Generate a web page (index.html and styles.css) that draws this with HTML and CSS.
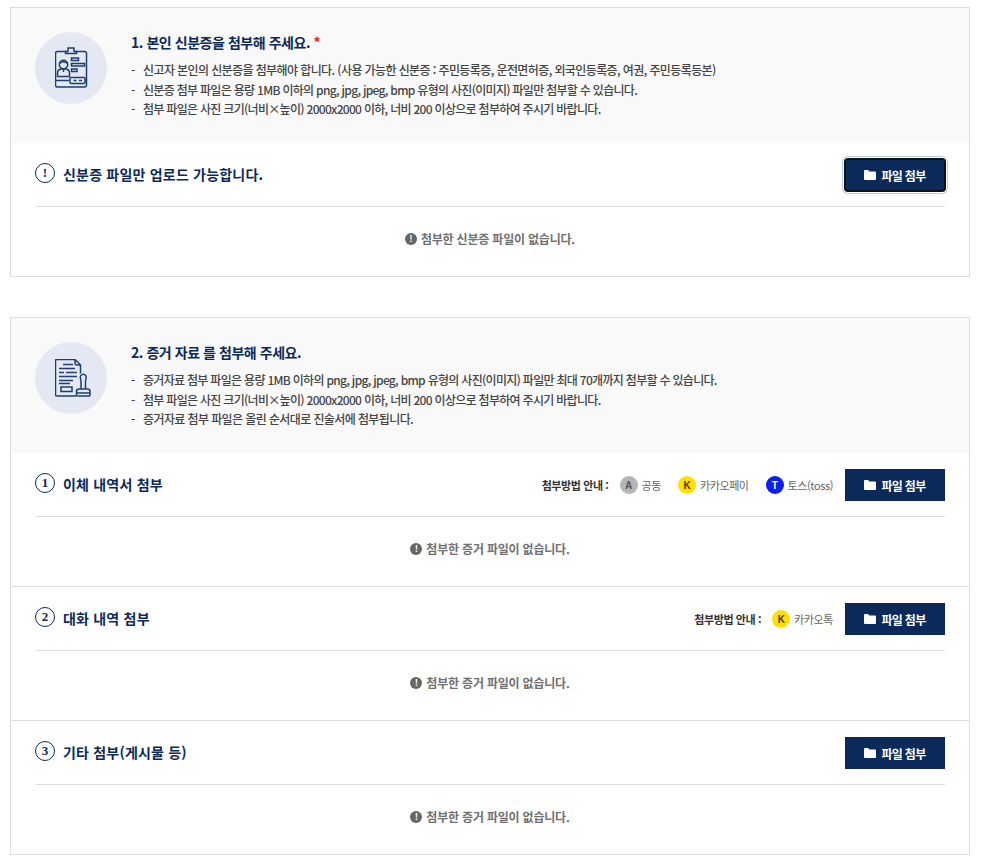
FILE: index.html
```html
<!DOCTYPE html>
<html lang="ko">
<head>
    <meta charset="UTF-8">
    <meta name="viewport" content="width=device-width, initial-scale=1.0">
    <title>파일 첨부</title>
    <link rel="stylesheet" href="styles.css">
</head>
<body>
    <section class="attach-box">
        <div class="guide">
            <div class="guide-icon">
                <svg class="id-icon" width="33" height="41" viewBox="0 0 33 41" fill="none" stroke="#1f3d6e" stroke-width="1.500">
                    <path d="M11 4.500H2.500q-2 0-2 2V38q0 2 2 2h27q2 0 2-2V6.500q0-2-2-2H21"/>
                    <path d="M0.500 33.500H14M30 33.500h1.500"/>
                    <path d="M10.500 6.500V4.500h2.500V1h6v3.500h2.500v2z"/>
                    <rect x="15" y="30.500" width="15" height="6" rx="1"/>
                    <path d="M18.500 33.500h3M24 33.500h3"/>
                    <circle cx="8.500" cy="17.500" r="4.200"/>
                    <path d="M4.300 16.500q4-3.500 8.400 0"/>
                    <path d="M2.500 29.500v-3q0-4 3.500-4.500h5q3.500 0.500 3.500 4.500v3z"/>
                    <path d="M8.500 22v3"/>
                    <path d="M16.500 11h7v2.500h-7zM16.500 16.500h13V19h-13zM16.500 22h5.500v2.500h-5.500z"/>
                </svg>
            </div>
            <div class="guide-text">
                <h2>1. 본인 신분증을 첨부해 주세요. <span class="required">*</span></h2>
                <ul>
                    <li class="loose">신고자 본인의 신분증을 첨부해야 합니다. (사용 가능한 신분증 : 주민등록증, 운전면허증, 외국인등록증, 여권, 주민등록등본)</li>
                    <li>신분증 첨부 파일은 용량 1MB 이하의 png, jpg, jpeg, bmp 유형의 사진(이미지) 파일만 첨부할 수 있습니다.</li>
                    <li>첨부 파일은 사진 크기(너비×높이) 2000x2000 이하, 너비 200 이상으로 첨부하여 주시기 바랍니다.</li>
                </ul>
            </div>
        </div>
        <div class="part">
            <div class="part-head">
                <span class="num">!</span>
                <h3>신분증 파일만 업로드 가능합니다.</h3>
                <button class="file-btn focused" type="button">
                    <svg class="folder" viewBox="0 0 12 10"><path d="M0 1q0-1 1-1h3l1.500 1.500H11q1 0 1 1V9q0 1-1 1H1q-1 0-1-1z"/></svg>
                    파일 첨부
                </button>
            </div>
            <p class="empty"><span class="empty-dot">!</span>첨부한 신분증 파일이 없습니다.</p>
        </div>
    </section>

    <section class="attach-box">
        <div class="guide">
            <div class="guide-icon">
                <svg class="doc-icon" width="36" height="38" viewBox="0 0 36 38" fill="none" stroke="#1f3d6e" stroke-width="1.500">
                    <path d="M21 37H1.500q-1 0-1-1V1.500q0-1 1-1H20l5.500 5.500v8.500"/>
                    <path d="M20 0.500v3.500q0 2 2 2h3.500"/>
                    <path d="M8 5.500h10M4 9.500h16M4 13.500h5M11 13.500h11M4 17.500h18M4 21.500h14M4 24.500h11"/>
                    <rect x="6" y="28" width="11" height="4.500"/>
                    <path d="M26 30v-7.500q0-1.500-0.500-3a3 3 0 1 1 5.500 0q-0.500 1.500-0.500 3V30"/>
                    <path d="M21.500 36v-3.500q0-2.500 2.500-2.500h8.500q2.500 0 2.500 2.500V36q0 1-1 1H22.500q-1 0-1-1zM21.500 34h13.500"/>
                </svg>
            </div>
            <div class="guide-text">
                <h2>2. 증거 자료 를 첨부해 주세요.</h2>
                <ul>
                    <li>증거자료 첨부 파일은 용량 1MB 이하의 png, jpg, jpeg, bmp 유형의 사진(이미지) 파일만 최대 70개까지 첨부할 수 있습니다.</li>
                    <li>첨부 파일은 사진 크기(너비×높이) 2000x2000 이하, 너비 200 이상으로 첨부하여 주시기 바랍니다.</li>
                    <li class="loose">증거자료 첨부 파일은 올린 순서대로 진술서에 첨부됩니다.</li>
                </ul>
            </div>
        </div>
        <div class="part">
            <div class="part-head">
                <span class="num">1</span>
                <h3>이체 내역서 첨부</h3>
                <div class="how">
                    <strong>첨부방법 안내 :</strong>
                    <span class="how-item"><i class="badge gray">A</i>공동</span>
                    <span class="how-item"><i class="badge yellow">K</i>카카오페이</span>
                    <span class="how-item"><i class="badge blue">T</i>토스(toss)</span>
                </div>
                <button class="file-btn" type="button">
                    <svg class="folder" viewBox="0 0 12 10"><path d="M0 1q0-1 1-1h3l1.500 1.500H11q1 0 1 1V9q0 1-1 1H1q-1 0-1-1z"/></svg>
                    파일 첨부
                </button>
            </div>
            <p class="empty"><span class="empty-dot">!</span>첨부한 증거 파일이 없습니다.</p>
        </div>
        <div class="part">
            <div class="part-head">
                <span class="num">2</span>
                <h3>대화 내역 첨부</h3>
                <div class="how">
                    <strong>첨부방법 안내 :</strong>
                    <span class="how-item"><i class="badge yellow">K</i>카카오톡</span>
                </div>
                <button class="file-btn" type="button">
                    <svg class="folder" viewBox="0 0 12 10"><path d="M0 1q0-1 1-1h3l1.500 1.500H11q1 0 1 1V9q0 1-1 1H1q-1 0-1-1z"/></svg>
                    파일 첨부
                </button>
            </div>
            <p class="empty"><span class="empty-dot">!</span>첨부한 증거 파일이 없습니다.</p>
        </div>
        <div class="part">
            <div class="part-head">
                <span class="num">3</span>
                <h3>기타 첨부(게시물 등)</h3>
                <button class="file-btn" type="button">
                    <svg class="folder" viewBox="0 0 12 10"><path d="M0 1q0-1 1-1h3l1.500 1.500H11q1 0 1 1V9q0 1-1 1H1q-1 0-1-1z"/></svg>
                    파일 첨부
                </button>
            </div>
            <p class="empty"><span class="empty-dot">!</span>첨부한 증거 파일이 없습니다.</p>
        </div>
    </section>
</body>
</html>
```

FILE: styles.css
```css
body {
    margin: 0;
    padding: 7px 13px 0 10px;
    font-family: "Noto Sans CJK KR", "Noto Sans", sans-serif;
    color: #333;
    background-color: #fff;
}

.attach-box {
    border: 1px solid #ddd;
    margin-bottom: 40px;
}

.guide {
    display: flex;
    align-items: flex-start;
    height: 135px;
    padding: 24px 24px 0;
    box-sizing: border-box;
    background-color: #f9f9f9;
}

.guide-icon {
    display: flex;
    align-items: center;
    justify-content: center;
    flex: none;
    width: 72px;
    height: 72px;
    margin-right: 24px;
    border-radius: 50%;
    background-color: #e3e8f2;
}

.id-icon {
    margin-bottom: 2px;
}

.doc-icon {
    margin-left: 4px;
}

.guide-text {
    margin-top: -1px;
}

.guide-text h2 {
    margin: 0 0 7.400px;
    font-size: 14px;
    line-height: 22px;
    font-weight: 700;
    color: #0b2a5a;
    letter-spacing: -0.45px;
}

.required {
    color: #e02020;
}

.guide-text ul {
    margin: 0;
    padding: 0;
    list-style: none;
}

.guide-text li {
    position: relative;
    padding-left: 12px;
    font-size: 12px;
    font-weight: 500;
    line-height: 19.500px;
    letter-spacing: -0.7px;
    color: #444;
}

.guide-text li.loose {
    letter-spacing: -0.6px;
}

.guide-text li::before {
    content: "-";
    position: absolute;
    left: 0;
}

.part + .part {
    border-top: 1px solid #ddd;
}

.part-head {
    display: flex;
    align-items: center;
    height: 64px;
    margin: 0 24px;
    padding: 16px 0 15px;
    box-sizing: border-box;
    border-bottom: 1px solid #ddd;
}

.part-head h3 {
    margin: 0 auto 3px 8px;
    font-size: 14px;
    font-weight: 700;
    color: #0b2a5a;
    letter-spacing: 0.2px;
}

.num {
    display: flex;
    align-items: center;
    justify-content: center;
    width: 20px;
    height: 20px;
    margin-bottom: 4px;
    box-sizing: border-box;
    border: 1.500px solid #0b2a5a;
    border-radius: 50%;
    font-family: "Liberation Serif", serif;
    font-size: 13px;
    font-weight: 700;
    color: #0b2a5a;
}

.how {
    display: flex;
    align-items: center;
    gap: 17px;
    margin-right: 12px;
    font-size: 11px;
    letter-spacing: -0.4px;
}

.how strong {
    margin-right: -6px;
    font-weight: 700;
}

.how-item {
    display: flex;
    align-items: center;
    color: #666;
}

.badge {
    display: flex;
    align-items: center;
    justify-content: center;
    width: 18px;
    height: 18px;
    margin-right: 4px;
    border-radius: 50%;
    font-family: "Liberation Sans", sans-serif;
    font-size: 10px;
    font-style: normal;
    font-weight: 700;
}

.gray {
    background-color: #b5b5b5;
    color: #555;
}

.yellow {
    background-color: #ffe000;
    color: #5a2d0c;
}

.blue {
    background-color: #0a1ef5;
    color: #fff;
}

.file-btn {
    display: flex;
    align-items: center;
    justify-content: center;
    gap: 5px;
    width: 100px;
    height: 32px;
    padding: 0;
    border: 0;
    background-color: #0b2a5a;
    color: #fff;
    font-family: inherit;
    font-size: 12px;
    font-weight: 700;
    letter-spacing: -0.7px;
}

.file-btn.focused {
    border-radius: 3px;
    outline: 2px solid #111;
    outline-offset: -1px;
    box-shadow: 0 0 0 2px #fff, 0 0 0 3px #b9cbe0;
}

.folder {
    width: 12px;
    height: 10px;
    fill: #fff;
}

.empty {
    display: flex;
    align-items: center;
    justify-content: center;
    height: 69px;
    margin: 0;
    padding-bottom: 6px;
    box-sizing: border-box;
    font-size: 12px;
    font-weight: 700;
    letter-spacing: -0.2px;
    color: #707070;
}

.empty-dot {
    display: flex;
    align-items: center;
    justify-content: center;
    width: 12px;
    height: 12px;
    margin-right: 4px;
    border-radius: 50%;
    background-color: #666;
    color: #fff;
    font-size: 9px;
    font-weight: 700;
}
```
